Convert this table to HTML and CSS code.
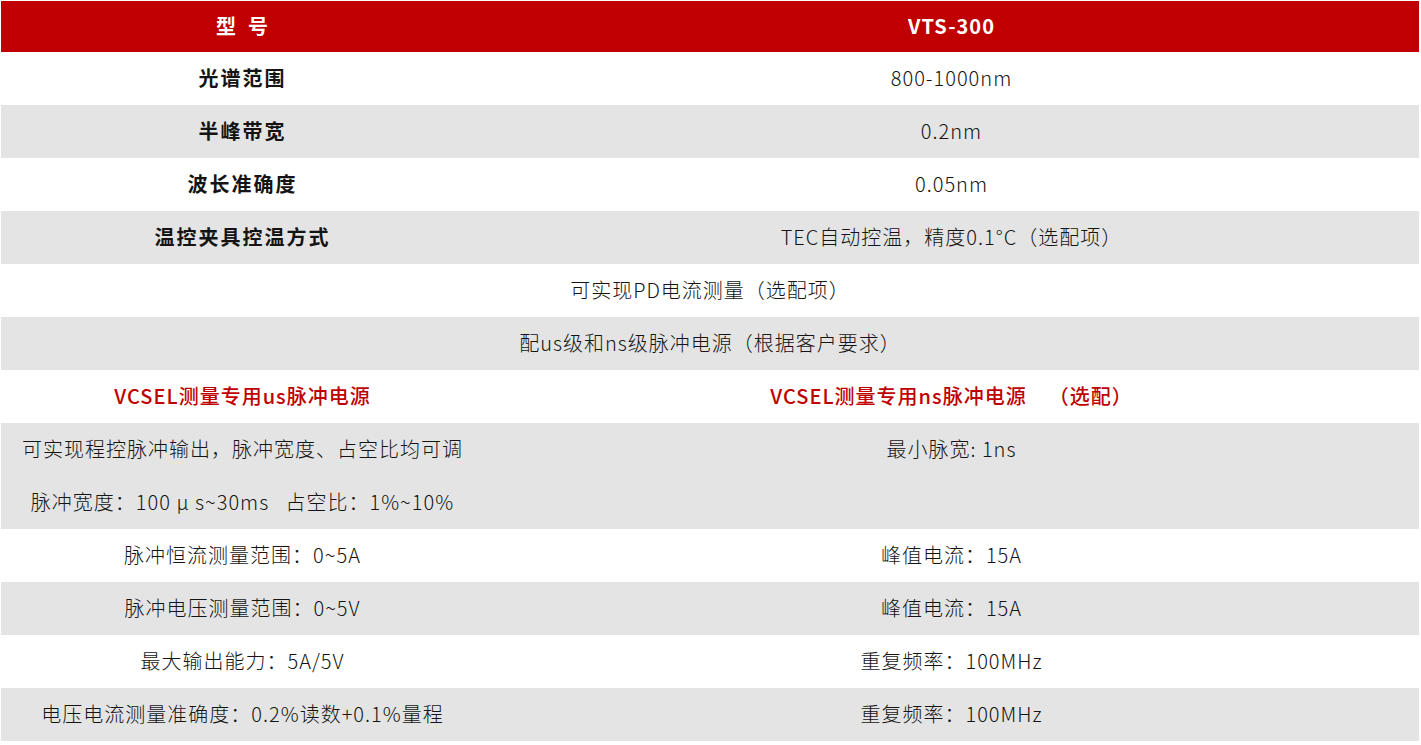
FILE: index.html
```html
<!DOCTYPE html>
<html lang="zh-CN">
<head>
<meta charset="utf-8">
<title>VTS-300</title>
<link rel="stylesheet" href="styles.css">
</head>
<body>
<table class="spec">
  <colgroup><col class="c-left"><col class="c-right"></colgroup>
  <thead>
    <tr class="head"><th>型&nbsp;&nbsp;号</th><th>VTS-300</th></tr>
  </thead>
  <tbody>
    <tr class="w"><td class="label">光谱范围</td><td>800-1000nm</td></tr>
    <tr class="g"><td class="label">半峰带宽</td><td>0.2nm</td></tr>
    <tr class="w"><td class="label">波长准确度</td><td>0.05nm</td></tr>
    <tr class="g"><td class="label">温控夹具控温方式</td><td>TEC自动控温，精度0.1°C（选配项）</td></tr>
    <tr class="w"><td colspan="2">可实现PD电流测量（选配项）</td></tr>
    <tr class="g"><td colspan="2">配us级和ns级脉冲电源（根据客户要求）</td></tr>
    <tr class="w sub"><td>VCSEL测量专用us脉冲电源</td><td>VCSEL测量专用ns脉冲电源&nbsp;&nbsp;&nbsp;&nbsp;（选配）</td></tr>
    <tr class="g double"><td><p>可实现程控脉冲输出，脉冲宽度、占空比均可调</p><p>脉冲宽度：100 μ s~30ms&nbsp;&nbsp;&nbsp;占空比：1%~10%</p></td><td class="top"><p>最小脉宽: 1ns</p></td></tr>
    <tr class="w"><td>脉冲恒流测量范围：0~5A</td><td>峰值电流：15A</td></tr>
    <tr class="g"><td>脉冲电压测量范围：0~5V</td><td>峰值电流：15A</td></tr>
    <tr class="w"><td>最大输出能力：5A/5V</td><td>重复频率：100MHz</td></tr>
    <tr class="g"><td>电压电流测量准确度：0.2%读数+0.1%量程</td><td>重复频率：100MHz</td></tr>
  </tbody>
</table>
</body>
</html>
```
FILE: styles.css
```css
html, body {
  margin: 0;
  padding: 0;
  background: #ffffff;
}
body {
  padding: 1px 0 0 1px;
  font-family: "Noto Sans CJK SC", "Noto Sans", sans-serif;
  font-weight: 300;
  font-size: 20px;
  letter-spacing: 1px;
  color: #141414;
}
.spec {
  border-collapse: collapse;
  table-layout: fixed;
  width: 1418px;
}
.c-left { width: 483px; }
.c-right { width: 935px; }
.spec th, .spec td {
  padding: 0 0 2px 0;
  text-align: center;
  vertical-align: middle;
}
.head th {
  background: #c00000;
  color: #ffffff;
  font-weight: 700;
  letter-spacing: 1px;
  height: 48px;
  padding-bottom: 3px;
}
.spec tbody tr { height: 53px; }
.w { background: #ffffff; }
.g { background: #e4e4e4; }
.label { font-weight: 700; letter-spacing: 2px; }
.sub td { color: #c00000; font-weight: 500; letter-spacing: 1px; }
.spec p {
  margin: 0;
  height: 53px;
  line-height: 51px;
}
.spec tr.double td { padding-bottom: 0; }
.spec tr.double { height: 106px; }
.spec td.top { vertical-align: top; }
```
